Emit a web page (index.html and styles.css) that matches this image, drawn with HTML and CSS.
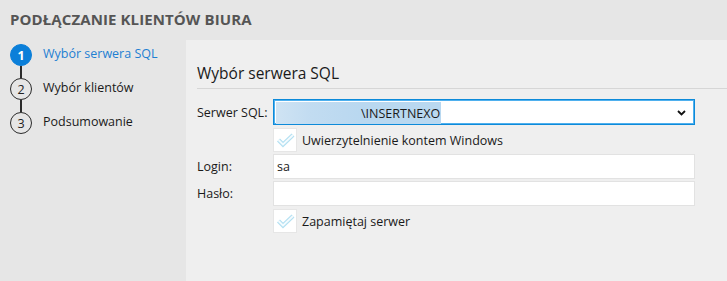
FILE: index.html
```html
<!DOCTYPE html>
<html lang="pl">
<head>
  <meta charset="UTF-8">
  <title>Podłączanie klientów biura</title>
  <link rel="stylesheet" href="styles.css">
</head>
<body>
  <div class="header">PODŁĄCZANIE KLIENTÓW BIURA</div>
  <div class="content">
    <div class="sidebar">
      <div class="step active">
        <div class="mark"><span class="circle">1</span><span class="line"></span></div>
        <span class="step-label">Wybór serwera SQL</span>
      </div>
      <div class="step">
        <div class="mark"><span class="circle">2</span><span class="line"></span></div>
        <span class="step-label">Wybór klientów</span>
      </div>
      <div class="step">
        <div class="mark"><span class="circle">3</span></div>
        <span class="step-label">Podsumowanie</span>
      </div>
    </div>

    <div class="main">
      <div class="section-title">Wybór serwera SQL</div>

      <div class="row row-select">
        <label class="label">Serwer SQL:</label>
        <div class="select">
          <span class="selected"><span class="blur"></span>\INSERTNEXO</span>
          <svg class="chevron" width="9" height="6" viewBox="0 0 9 6">
            <path d="M1 1 L4.5 4.5 L8 1" fill="none" stroke="#111" stroke-width="1.8"/>
          </svg>
        </div>
      </div>

      <div class="row row-check">
        <span class="label"></span>
        <span class="checkbox">
          <svg width="24" height="24" viewBox="0 0 24 24">
            <path d="M5.5 12 L10 16.5 L20 7" fill="none" stroke="#b3e0f2" stroke-width="4.2"/>
            <path d="M5.5 12 L10 16.5 L20 7" fill="none" stroke="#f4fbfe" stroke-width="1.8"/>
          </svg>
        </span>
        <span class="check-label">Uwierzytelnienie kontem Windows</span>
      </div>

      <div class="row row-input">
        <label class="label">Login:</label>
        <div class="input">sa</div>
      </div>

      <div class="row row-input2">
        <label class="label">Hasło:</label>
        <div class="input"></div>
      </div>

      <div class="row row-check2">
        <span class="label"></span>
        <span class="checkbox">
          <svg width="24" height="24" viewBox="0 0 24 24">
            <path d="M5.5 12 L10 16.5 L20 7" fill="none" stroke="#b3e0f2" stroke-width="4.2"/>
            <path d="M5.5 12 L10 16.5 L20 7" fill="none" stroke="#f4fbfe" stroke-width="1.8"/>
          </svg>
        </span>
        <span class="check-label">Zapamiętaj serwer</span>
      </div>
    </div>
  </div>
</body>
</html>
```

FILE: styles.css
```css
* { box-sizing: border-box; }
html, body {
  margin: 0;
  height: 100%;
}
body {
  font-family: 'Open Sans', 'Noto Sans', sans-serif;
  font-size: 12.5px;
  color: #1a1a1a;
  background: #e6e6e6;
  width: 727px;
  height: 281px;
  overflow: hidden;
  display: flex;
  flex-direction: column;
}
.header {
  height: 40px;
  padding-left: 10px;
  line-height: 38px;
  font-weight: 700;
  font-size: 15px;
  color: #555;
  letter-spacing: 0.1px;
}
.content {
  flex: 1;
  display: flex;
}
.sidebar {
  width: 186px;
  padding: 4px 0 0 10px;
}
.step {
  display: flex;
  gap: 11px;
  height: 34px;
}
.mark {
  width: 22px;
  display: flex;
  flex-direction: column;
  align-items: center;
}
.circle {
  width: 22px;
  height: 22px;
  border-radius: 50%;
  border: 1.5px solid #2b2b2b;
  display: flex;
  align-items: center;
  justify-content: center;
  font-size: 12.5px;
  color: #222;
  flex-shrink: 0;
}
.line {
  width: 1.5px;
  flex: 1;
  background: #2b2b2b;
}
.step-label {
  line-height: 20px;
}
.step.active .circle {
  background: #0b7fd9;
  border-color: #0b7fd9;
  color: #fff;
  font-weight: 700;
}
.step.active .step-label {
  color: #1e7fd2;
}
.main {
  flex: 1;
  background: #efefef;
  padding-left: 11px;
}
.section-title {
  font-size: 15.5px;
  height: 49px;
  padding-top: 22px;
  line-height: 22px;
  border-bottom: 1px solid #d6d6d6;
}
.row {
  display: flex;
  align-items: center;
}
.label {
  width: 76px;
  flex-shrink: 0;
}
.row-select { margin-top: 10px; height: 26px; }
.row-check { margin-top: 3px; height: 24px; }
.row-input { margin-top: 2px; height: 25px; }
.row-input2 { margin-top: 2px; height: 25px; }
.row-check2 { margin-top: 3px; height: 24px; }
.select {
  width: 422px;
  height: 26px;
  border: 1px solid #0d8ad9;
  box-shadow: inset 0 0 0 1px #4fb0ee;
  background: #fff;
  display: flex;
  align-items: center;
  justify-content: space-between;
  padding: 2px 8px 0 2px;
}
.selected {
  height: 22px;
  display: flex;
  align-items: center;
  background: #b9d8f0;
  padding-right: 1px;
  color: #1a1a1a;
}
.blur {
  width: 85px;
  height: 100%;
  background: linear-gradient(90deg, #cfe3f3, #c2dcf1 40%, #bcd9f0 80%, #b9d8f0);
}
.chevron { margin-top: -1px; }
.checkbox {
  width: 24px;
  height: 24px;
  background: #fff;
  border: 1px solid #e6e6e6;
  display: flex;
  align-items: center;
  justify-content: center;
}
.checkbox svg { margin: -1px; }
.check-label {
  margin-left: 5px;
}
.input {
  width: 422px;
  height: 25px;
  background: #fff;
  border: 1px solid #e2e2e2;
  padding-left: 3px;
  line-height: 23px;
}
```
